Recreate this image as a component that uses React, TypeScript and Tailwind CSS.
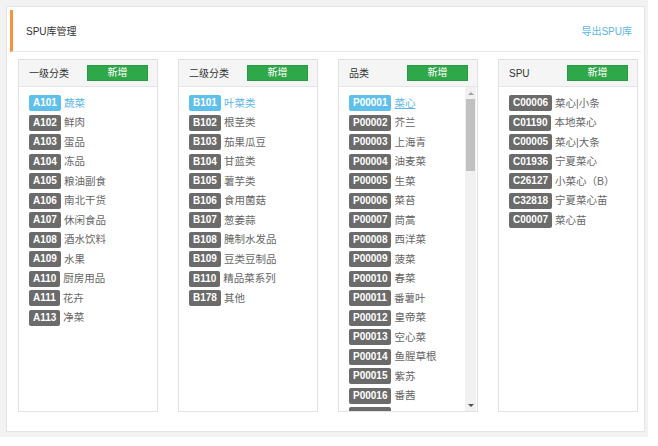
import React from 'react';

type Item = { code: string; name: string };

const level1: Item[] = [
  { code: 'A101', name: '蔬菜' },
  { code: 'A102', name: '鲜肉' },
  { code: 'A103', name: '蛋品' },
  { code: 'A104', name: '冻品' },
  { code: 'A105', name: '粮油副食' },
  { code: 'A106', name: '南北干货' },
  { code: 'A107', name: '休闲食品' },
  { code: 'A108', name: '酒水饮料' },
  { code: 'A109', name: '水果' },
  { code: 'A110', name: '厨房用品' },
  { code: 'A111', name: '花卉' },
  { code: 'A113', name: '净菜' },
];

const level2: Item[] = [
  { code: 'B101', name: '叶菜类' },
  { code: 'B102', name: '根茎类' },
  { code: 'B103', name: '茄果瓜豆' },
  { code: 'B104', name: '甘蓝类' },
  { code: 'B105', name: '薯芋类' },
  { code: 'B106', name: '食用菌菇' },
  { code: 'B107', name: '葱姜蒜' },
  { code: 'B108', name: '腌制水发品' },
  { code: 'B109', name: '豆类豆制品' },
  { code: 'B110', name: '精品菜系列' },
  { code: 'B178', name: '其他' },
];

const products: Item[] = [
  { code: 'P00001', name: '菜心' },
  { code: 'P00002', name: '芥兰' },
  { code: 'P00003', name: '上海青' },
  { code: 'P00004', name: '油麦菜' },
  { code: 'P00005', name: '生菜' },
  { code: 'P00006', name: '菜苔' },
  { code: 'P00007', name: '茼蒿' },
  { code: 'P00008', name: '西洋菜' },
  { code: 'P00009', name: '菠菜' },
  { code: 'P00010', name: '春菜' },
  { code: 'P00011', name: '番薯叶' },
  { code: 'P00012', name: '皇帝菜' },
  { code: 'P00013', name: '空心菜' },
  { code: 'P00014', name: '鱼腥草根' },
  { code: 'P00015', name: '紫苏' },
  { code: 'P00016', name: '番茜' },
];

const spus: Item[] = [
  { code: 'C00006', name: '菜心|小条' },
  { code: 'C01190', name: '本地菜心' },
  { code: 'C00005', name: '菜心|大条' },
  { code: 'C01936', name: '宁夏菜心' },
  { code: 'C26127', name: '小菜心（B）' },
  { code: 'C32818', name: '宁夏菜心苗' },
  { code: 'C00007', name: '菜心苗' },
];

function Row({ item, active, underline }: { item: Item; active?: boolean; underline?: boolean }) {
  return (
    <div className="flex items-center h-[16px] shrink-0">
      <span
        className={`h-[16px] px-[4px] rounded-[2px] flex items-center text-[10px] font-bold text-white leading-none ${
          active ? 'bg-[#5fc0ec]' : 'bg-[#6b6b6b]'
        }`}
      >
        {item.code}
      </span>
      <span
        className={`ml-[3px] text-[10.5px] leading-none whitespace-nowrap ${
          active ? 'text-[#5cb6e8]' : 'text-[#666]'
        } ${underline ? 'underline' : ''}`}
      >
        {item.name}
      </span>
    </div>
  );
}

function Column({
  title,
  items,
  scroll,
  highlight = true,
  underlineActive,
}: {
  title: string;
  items: Item[];
  scroll?: boolean;
  highlight?: boolean;
  underlineActive?: boolean;
}) {
  return (
    <div className="w-[140px] h-[353px] border border-[#e2e2e2] flex flex-col bg-white">
      <div className="h-[27px] shrink-0 bg-[#f5f5f5] border-b border-[#e6e6e6] flex items-center justify-between pl-[10px] pr-[9px]">
        <span className="text-[10px] text-[#333]">{title}</span>
        <button className="w-[61px] h-[16px] bg-[#2fa84a] border border-[#2a9a43] text-white text-[10px] leading-none flex items-center justify-center">
          新增
        </button>
      </div>
      <div className="flex-1 flex min-h-0">
        <div className="flex-1 overflow-hidden pl-[10px] pt-[8px] flex flex-col gap-[3.5px]">
          {items.map((it, i) => (
            <Row key={it.code} item={it} active={highlight && i === 0} underline={i === 0 && underlineActive} />
          ))}
          {scroll && <div className="w-[42px] h-[16px] shrink-0 rounded-[2px] bg-[#6b6b6b]" />}
        </div>
        {scroll && (
          <div className="w-[11px] mr-[1px] bg-[#f1f1f1] flex flex-col items-center shrink-0">
            <div className="h-[12px] w-full flex items-center justify-center">
              <div className="w-0 h-0 border-l-[3px] border-r-[3px] border-b-[3px] border-l-transparent border-r-transparent border-b-[#a3a3a3]" />
            </div>
            <div className="w-[9px] h-[72px] bg-[#c1c1c1]" />
            <div className="flex-1" />
            <div className="h-[12px] w-full flex items-center justify-center">
              <div className="w-0 h-0 border-l-[3px] border-r-[3px] border-t-[3px] border-l-transparent border-r-transparent border-t-[#505050]" />
            </div>
          </div>
        )}
      </div>
    </div>
  );
}

export default function App() {
  return (
    <div
      className="w-[648px] h-[437px] bg-[#f2f2f2] pt-[6px] pl-[6px] pr-[3px] pb-[5px]"
      style={{ fontFamily: '"Liberation Sans", "Noto Sans CJK SC", sans-serif' }}
    >
      <div className="h-full border border-[#e4e4e4] bg-white p-[3px] flex flex-col">
        <div className="h-[42px] shrink-0 border-l-[3px] border-[#f7923f] border-b border-b-[#e6e6e6] flex items-center justify-between pl-[13px] pr-[9px] pt-[2px]">
          <span className="text-[10px] text-[#333]">SPU库管理</span>
          <a className="text-[10px] text-[#5cb6e8] cursor-pointer">导出SPU库</a>
        </div>
        <div className="flex gap-[20px] pl-[8px] pt-[7px]">
          <Column title="一级分类" items={level1} />
          <Column title="二级分类" items={level2} />
          <Column title="品类" items={products} scroll underlineActive />
          <Column title="SPU" items={spus} highlight={false} />
        </div>
      </div>
    </div>
  );
}
